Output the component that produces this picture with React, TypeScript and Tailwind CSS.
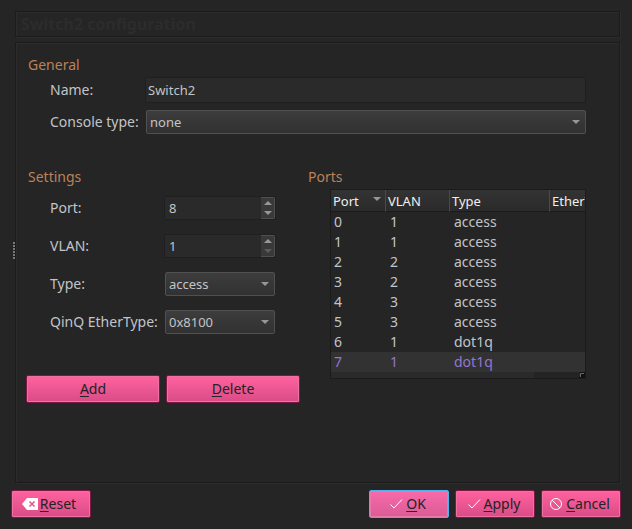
import { useState } from "react";
import type { ReactNode } from "react";

const frame =
  "border border-[#1b1b1b] shadow-[inset_1px_1px_0_#2c2c2c,1px_1px_0_#2c2c2c]";
const label = "text-sm leading-5 text-[#c3c4c8]";
const heading = "text-sm leading-5 text-[#bb8259]";

function Triangle({ up = false, dim = false }: { up?: boolean; dim?: boolean }) {
  return (
    <svg width="8" height="4" viewBox="0 0 8 4" fill={dim ? "#5c5c5c" : "#97979b"} aria-hidden="true">
      <path d={up ? "M0 4L4 0L8 4Z" : "M0 0L4 4L8 0Z"} />
    </svg>
  );
}

function Dropdown({ id, options, wide = false }: { id: string; options: string[]; wide?: boolean }) {
  return (
    <div className={wide ? "relative flex-1" : "relative w-[110px]"}>
      <select
        id={id}
        className="block h-6 w-full appearance-none rounded-xs border border-[#505050] bg-linear-to-b from-[#3d3d3d] to-[#313131] pr-5 pl-[3px] text-[13px] leading-5 text-[#c3c4c8] outline-none"
      >
        {options.map((option) => (
          <option key={option}>{option}</option>
        ))}
      </select>
      <span className="pointer-events-none absolute inset-y-0 right-1.5 flex items-center">
        <Triangle />
      </span>
    </div>
  );
}

function Spinner({ id, initial, min }: { id: string; initial: number; min: number }) {
  const [value, setValue] = useState(initial);
  return (
    <div className="flex h-6 w-28 rounded-xs border border-[#1f1f1f] bg-[#2a2a2a]">
      <input
        id={id}
        type="text"
        inputMode="numeric"
        value={value}
        onChange={(e) => setValue(Number(e.target.value) || min)}
        className="w-0 flex-1 bg-transparent pl-1 text-[13px] leading-5 text-[#c3c4c8] outline-none"
      />
      <div className="flex w-3.5 flex-col gap-px rounded-r-xs border border-l-0 border-[#505050] bg-[#393939] py-px">
        <button
          type="button"
          aria-label="Increase"
          onClick={() => setValue(value + 1)}
          className="flex flex-1 items-center justify-center"
        >
          <Triangle up />
        </button>
        <button
          type="button"
          aria-label="Decrease"
          disabled={value <= min}
          onClick={() => setValue(value - 1)}
          className="flex flex-1 items-center justify-center"
        >
          <Triangle dim={value <= min} />
        </button>
      </div>
    </div>
  );
}

function PinkButton({
  hotkey,
  rest,
  icon,
  size,
  focused = false,
}: {
  hotkey: string;
  rest: string;
  icon?: ReactNode;
  size: string;
  focused?: boolean;
}) {
  const tone = focused
    ? "border-[#4db2ec] from-[#f96aab] to-[#da5c95] shadow-[inset_0_0_0_1px_#e978ab]"
    : "border-[#7e1845] from-[#ff629f] to-[#d94c86] shadow-[inset_0_0_0_1px_#f070a4]";
  return (
    <button
      type="button"
      className={`flex h-7 items-center justify-center gap-0.5 rounded-xs border bg-linear-to-b text-sm leading-5 text-[#232323] ${tone} ${size}`}
    >
      {icon}
      <span>
        <span className="underline underline-offset-2">{hotkey}</span>
        {rest}
      </span>
    </button>
  );
}

const Check = (
  <svg width="16" height="16" viewBox="0 0 16 16" fill="none" stroke="#fff" aria-hidden="true">
    <path d="M2.5 8.5L6 12L14 3.5" />
  </svg>
);

const Forbidden = (
  <svg width="16" height="16" viewBox="0 0 16 16" fill="none" stroke="#fff" aria-hidden="true">
    <circle cx="8" cy="8" r="5.5" />
    <path d="M4 4L12 12" />
  </svg>
);

const Clear = (
  <svg width="16" height="16" viewBox="0 0 16 16" aria-hidden="true">
    <path d="M0 8L5 2H16V14H5Z" fill="#fff" />
    <path d="M7.5 5.5L12.5 10.5M12.5 5.5L7.5 10.5" stroke="#ea5491" strokeWidth="1.6" />
  </svg>
);

const ports = [
  [0, 1, "access"],
  [1, 1, "access"],
  [2, 2, "access"],
  [3, 2, "access"],
  [4, 3, "access"],
  [5, 3, "access"],
  [6, 1, "dot1q"],
  [7, 1, "dot1q"],
] as const;

function PortsTable() {
  const [selected, setSelected] = useState(7);
  const th = "h-[22px] border-b border-b-[#1b1b1b] p-0 pl-0.5 text-left font-normal";
  return (
    <div className="ml-6 border border-[#1b1b1b]">
      <div className="overflow-hidden">
        <table className="w-80 table-fixed border-separate border-spacing-0">
          <colgroup>
            <col className="w-[55px]" />
            <col className="w-16" />
            <col className="w-[100px]" />
            <col />
          </colgroup>
          <thead className="bg-linear-to-b from-[#333333] to-[#2a2a2a] text-[13px] leading-5 text-[#f0f0f0]">
            <tr>
              <th className={`${th} border-r border-r-[#4a4a4a]`}>
                <span className="flex items-center justify-between pr-1">
                  Port
                  <span className="pb-1">
                    <Triangle />
                  </span>
                </span>
              </th>
              <th className={`${th} border-r border-r-[#4a4a4a]`}>VLAN</th>
              <th className={`${th} border-r border-r-[#4a4a4a]`}>Type</th>
              <th className={th}>EtherType</th>
            </tr>
          </thead>
          <tbody className="text-sm leading-5 text-[#c3c4c8]">
            {ports.map(([port, vlan, type]) => (
              <tr
                key={port}
                onClick={() => setSelected(port)}
                className={port === selected ? "bg-[#323232] text-[#9575cd]" : ""}
              >
                <td className="h-5 p-0 pl-[3px]">{port}</td>
                <td className="h-5 p-0 pl-1">{vlan}</td>
                <td className="h-5 p-0 pl-1">{type}</td>
                <td className="h-5 p-0 pl-1" />
              </tr>
            ))}
          </tbody>
        </table>
      </div>
      <div className="flex h-1.5 justify-between bg-[#242424]">
        <div className="w-4/5 bg-[#2a2a2a]" />
        <svg width="6" height="6" viewBox="0 0 6 6" aria-hidden="true">
          <path d="M0 6V5L1 4V0H6V6Z" fill="#111" />
          <path d="M1.5 5V1.5H5" fill="none" stroke="#66686e" />
        </svg>
      </div>
    </div>
  );
}

export default function App() {
  return (
    <div className="flex min-h-screen flex-col bg-[#252525] pb-[11px] font-['Noto_Sans',sans-serif]">
      <div className="flex flex-1">
        <div className="flex w-[15px] shrink-0 items-center justify-end pt-2.5">
          <div className="flex flex-col gap-px">
            {[0, 1, 2, 3, 4, 5].map((dot) => (
              <span key={dot} className="h-0.5 w-0.5 bg-[#77777a]" />
            ))}
          </div>
        </div>

        <main className="flex min-w-0 flex-1 flex-col gap-[5px] pt-[11px] pr-3 pb-[7px]">
          <h1 className={`h-[26px] px-[5px] text-base leading-6 font-bold text-[#2c2c2c] ${frame}`}>
            Switch2 configuration
          </h1>

          <div className={`flex-1 pt-3 pr-[33px] pl-2.5 ${frame}`}>
            <section className="flex flex-col">
              <h2 className={`${heading} ml-0.5`}>General</h2>
              <div className="mt-0.5 ml-6 flex items-center">
                <label htmlFor="name" className={`${label} w-[95px]`}>
                  Name:
                </label>
                <input
                  id="name"
                  defaultValue="Switch2"
                  className="h-[26px] w-0 flex-1 rounded-xs border border-[#1f1f1f] bg-[#2a2a2a] px-0.5 text-[13px] leading-5 text-[#c3c4c8] outline-none"
                />
              </div>
              <div className="mt-[7px] ml-6 flex items-center">
                <label htmlFor="console" className={`${label} w-24`}>
                  Console type:
                </label>
                <Dropdown id="console" options={["none", "telnet"]} wide />
              </div>
            </section>

            <div className="mt-[33px] flex gap-1.5">
              <section className="w-[274px] shrink-0">
                <h2 className={`${heading} ml-0.5`}>Settings</h2>
                <div className="mt-[9px] ml-6 flex flex-col gap-3.5">
                  <div className="flex items-center">
                    <label htmlFor="port" className={`${label} w-[114px]`}>
                      Port:
                    </label>
                    <Spinner id="port" initial={8} min={0} />
                  </div>
                  <div className="flex items-center">
                    <label htmlFor="vlan" className={`${label} w-[114px]`}>
                      VLAN:
                    </label>
                    <Spinner id="vlan" initial={1} min={1} />
                  </div>
                  <div className="flex items-center">
                    <label htmlFor="type" className={`${label} w-[115px]`}>
                      Type:
                    </label>
                    <Dropdown id="type" options={["access", "dot1q", "qinq"]} />
                  </div>
                  <div className="flex items-center">
                    <label htmlFor="ethertype" className={`${label} w-[115px]`}>
                      QinQ EtherType:
                    </label>
                    <Dropdown id="ethertype" options={["0x8100", "0x88A8"]} />
                  </div>
                </div>
                <div className="mt-[41px] flex gap-1.5">
                  <PinkButton hotkey="A" rest="dd" size="flex-1" />
                  <PinkButton hotkey="D" rest="elete" size="flex-1" />
                </div>
              </section>

              <section className="min-w-0 flex-1">
                <h2 className={`${heading} mb-0.5 ml-0.5`}>Ports</h2>
                <PortsTable />
              </section>
            </div>
          </div>
        </main>
      </div>

      <footer className="flex gap-1.5 px-[11px]">
        <PinkButton hotkey="R" rest="eset" icon={Clear} size="mr-auto w-20 pr-1" />
        <PinkButton hotkey="O" rest="K" icon={Check} size="w-20 pr-1" focused />
        <PinkButton hotkey="A" rest="pply" icon={Check} size="w-20 pr-1" />
        <PinkButton hotkey="C" rest="ancel" icon={Forbidden} size="w-20 pr-1" />
      </footer>
    </div>
  );
}
